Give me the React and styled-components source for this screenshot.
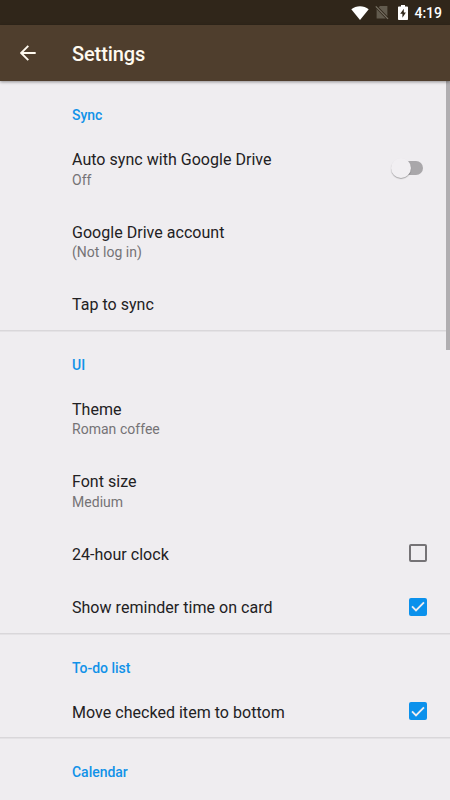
import React from 'react'
import styled, { createGlobalStyle } from 'styled-components'

const sections = [
    {
        title: 'Sync',
        items: [
            { title: 'Auto sync with Google Drive', summary: 'Off', control: 'switch' },
            { title: 'Google Drive account', summary: '(Not log in)' },
            { title: 'Tap to sync' },
        ],
    },
    {
        title: 'UI',
        items: [
            { title: 'Theme', summary: 'Roman coffee' },
            { title: 'Font size', summary: 'Medium' },
            { title: '24-hour clock', control: 'checkbox', checked: false },
            { title: 'Show reminder time on card', control: 'checkbox', checked: true },
        ],
    },
    {
        title: 'To-do list',
        items: [
            { title: 'Move checked item to bottom', control: 'checkbox', checked: true },
        ],
    },
    { title: 'Calendar', items: [] },
]

const Checkbox = ({ checked }) => (
    <Box $checked={checked}>
        {checked && (
            <svg width="19" height="19" viewBox="0 0 19 19" fill="none">
                <path d="M3.2 9.4L7.4 13.6L15.8 5.2" stroke="#efedf0" strokeWidth="2" />
            </svg>
        )}
    </Box>
)

const Item = ({ data }) => {
    const { title, summary, control, checked } = data

    return (
        <Row $tall={Boolean(summary)}>
            <Labels>
                <Title>{title}</Title>
                {summary && <Summary>{summary}</Summary>}
            </Labels>
            {control === 'switch' && <Switch><Thumb /></Switch>}
            {control === 'checkbox' && <Checkbox checked={checked} />}
        </Row>
    )
}

const App = () => (
    <>
        <GlobalStyle />
        <Screen>
            <StatusBar>
                <svg width="18" height="14" viewBox="0 0 18 14">
                    <path d="M9 14L0.3 3.2C2.8 1.2 5.7 0.2 9 0.2S15.2 1.2 17.7 3.2Z" fill="#fff" />
                </svg>
                <NoSim width="14" height="15" viewBox="0 0 14 15">
                    <path d="M5 1H12.4V11.2L3.7 2.3ZM1.6 4.1L10.7 13.4H1.6Z" fill="#625b4e" />
                    <path d="M0.8 1.3L13 13.9" stroke="#7a7366" strokeWidth="1.2" />
                </NoSim>
                <Battery width="10" height="15" viewBox="0 0 10 15">
                    <path d="M3 0H7V1.5H9.2Q10 1.5 10 2.3V14.2Q10 15 9.2 15H0.8Q0 15 0 14.2V2.3Q0 1.5 0.8 1.5H3Z" fill="#fff" />
                    <path d="M5.8 3.8L2.2 8.8H4.4V12.7L7.9 7.6H5.8Z" fill="#30271b" />
                </Battery>
                <Clock>4:19</Clock>
            </StatusBar>
            <Toolbar>
                <svg width="16" height="16" viewBox="0 0 16 16" fill="none">
                    <path d="M15.7 8H1.5M8.3 0.8L1.1 8L8.3 15.2" stroke="#fffaf0" strokeWidth="1.9" />
                </svg>
                <Heading>Settings</Heading>
            </Toolbar>
            <Content>
                {sections.map(section => (
                    <Section key={section.title}>
                        <SectionTitle>{section.title}</SectionTitle>
                        {section.items.map(item => <Item key={item.title} data={item} />)}
                    </Section>
                ))}
                <Scrollbar />
            </Content>
        </Screen>
    </>
)

export default App

const GlobalStyle = createGlobalStyle`
    * {
        box-sizing: border-box;
    }
    body {
        margin: 0;
        overflow: hidden;
        font-family: Roboto, sans-serif;
    }
`

const Screen = styled.div`
    width: 450px;
    height: 800px;
    display: flex;
    flex-direction: column;
    overflow: hidden;
    background-color: #efedf0;
`

const StatusBar = styled.div`
    flex: none;
    height: 25px;
    display: flex;
    align-items: center;
    padding-right: 8px;
    justify-content: flex-end;
    background-color: #30261a;
`

const NoSim = styled.svg`
    margin-left: 6px;
`

const Battery = styled.svg`
    margin-left: 9px;
`

const Clock = styled.span`
    margin-left: 6px;
    padding-top: 2px;
    font-size: 14px;
    font-weight: 500;
    line-height: 23px;
    color: #fff;
`

const Toolbar = styled.header`
    flex: none;
    height: 56px;
    display: flex;
    align-items: center;
    gap: 36px;
    padding-left: 20px;
    background-color: #4f3e2d;
    box-shadow: 0 1px 3px rgba(0, 0, 0, 0.4);
    z-index: 1;
`

const Heading = styled.h1`
    margin: 2px 0 0;
    font-size: 20px;
    font-weight: 500;
    line-height: 24px;
    letter-spacing: -0.1px;
    color: #fffaf0;
`

const Content = styled.main`
    position: relative;
    flex: 1;
    min-height: 0;
    overflow: hidden;
`

const Section = styled.section`
    & + & {
        margin-top: -1px;
        padding-top: 1px;
        box-shadow: inset 0 1.5px #d9d7da;
    }
`

const SectionTitle = styled.h2`
    height: 51px;
    margin: 0;
    padding: 26px 0 0 72px;
    font-size: 14px;
    font-weight: 500;
    line-height: 16px;
    letter-spacing: -0.03px;
    color: #1192e8;
`

const Row = styled.div`
    height: ${({ $tall }) => ($tall ? '72.5px' : '53.5px')};
    display: flex;
    align-items: center;
    justify-content: space-between;
    padding: 0 23px 0 72px;
`

const Labels = styled.div`
    display: flex;
    flex-direction: column;
    padding-top: 3px;
`

const Title = styled.span`
    font-size: 16px;
    line-height: 20px;
    letter-spacing: 0.03px;
    color: #222123;
`

const Summary = styled.span`
    padding-top: 0.5px;
    font-size: 14px;
    line-height: 19px;
    letter-spacing: 0.03px;
    color: #757376;
`

const Switch = styled.div`
    width: 32px;
    height: 14px;
    display: flex;
    align-items: center;
    margin-right: 4px;
    border-radius: 7px;
    background: linear-gradient(to right, transparent 10px, #a9a7aa 10px);
`

const Thumb = styled.div`
    width: 20px;
    height: 20px;
    border-radius: 50%;
    background-color: #f1eff2;
    box-shadow: 0 1px 1px rgba(0, 0, 0, 0.3);
`

const Box = styled.div`
    width: 18px;
    height: 18px;
    display: flex;
    align-items: center;
    justify-content: center;
    border: ${({ $checked }) => ($checked ? 'none' : '2px solid #757376')};
    border-radius: 2px;
    background-color: ${({ $checked }) => ($checked ? '#0b91ec' : 'transparent')};
`

const Scrollbar = styled.div`
    position: absolute;
    top: 0;
    right: 0;
    width: 4px;
    height: 269px;
    background-color: #b0aeb1;
`
